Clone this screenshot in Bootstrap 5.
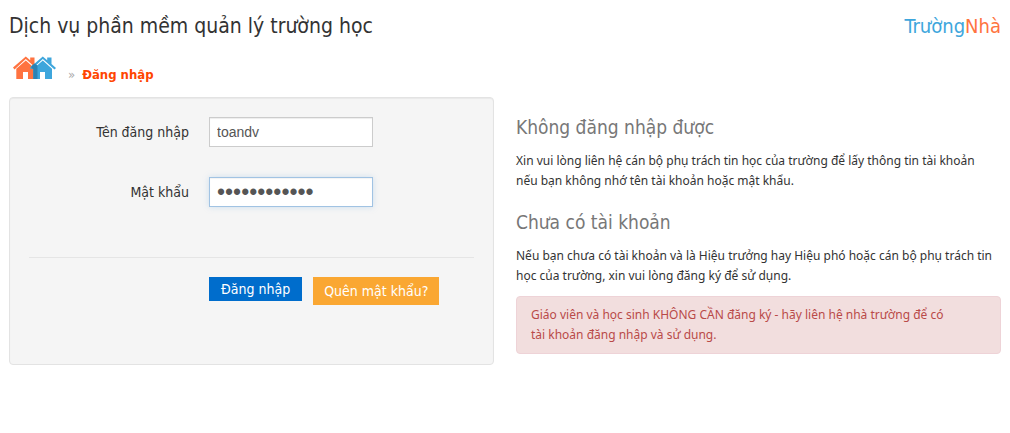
<!DOCTYPE html>
<html lang="vi">
<head>
<meta charset="utf-8">
<meta name="viewport" content="width=device-width, initial-scale=1">
<title>Đăng nhập - TrườngNhà</title>
<link href="https://cdn.jsdelivr.net/npm/bootstrap@5.3.0/dist/css/bootstrap.min.css" rel="stylesheet">
<style>
body { font-family: "DejaVu Sans Condensed", "Noto Sans", sans-serif; font-size: 12px; line-height: 20px; color: #333; background: #fff; }
.page { padding: 10px 9px; }
.site-title { font-size: 21px; line-height: 32px; }
.brand { font-size: 20px; line-height: 32px; color: #3ea6dc; text-decoration: none; }
.brand span { color: #ff7340; }
.crumbs { height: 55px; padding: 14px 4px 0; gap: 12px; }
.crumbs svg { display: block; width: 43px; height: 24px; }
.crumbs .trail { gap: 7px; padding-top: 9px; font-size: 13px; }
.crumbs .sep { color: #aaa; }
.crumbs .here { color: #ff4500; text-decoration: none; }
.panels { display: grid; gap: 22px; grid-template-columns: 1fr; }
@media (min-width: 768px) { .panels { grid-template-columns: 1fr 1fr; } }
.well { min-height: 268px; padding: 19px; background: #f5f5f5; border: 1px solid #e3e3e3; border-radius: 4px; box-shadow: inset 0 1px 1px rgba(0,0,0,.05); }
.field-row { gap: 20px; margin-bottom: 30px; }
.field-label { width: 160px; font-size: 14px; line-height: 20px; padding-top: 5px; text-align: right; }
.field { width: 164px; height: 30px; padding: 4px 7px; border: 1px solid #ccc; border-radius: 0; font: 14px/20px "Liberation Sans", Arial, sans-serif; color: #555; box-shadow: inset 0 1px 1px rgba(0,0,0,.075); }
.field-active { font-size: 23px; border-color: #a1c3e3; box-shadow: inset 0 1px 1px rgba(0,0,0,.05), 0 0 6px rgba(130,180,225,.35); }
.actions { border-top: 1px solid #e5e5e5; padding: 19px 0 0 180px; margin-top: 50px; gap: 11px; }
.actions .btn { font-size: 14px; line-height: 20px; border: 0; border-radius: 0; padding: 2px 12px; color: #fff; white-space: nowrap; }
.actions .btn-login { background: #006dcc; }
.actions .btn-forgot { background: #faa732; padding: 4px 11px; }
.help { padding-top: 20px; }
.help h2 { font-size: 19px; line-height: 20px; font-weight: 400; color: #777; margin: 0 0 14px; }
.help p { margin-bottom: 21px; padding-right: 6px; }
.help p, .help .notice { font-family: "Noto Sans", sans-serif; }
.help .notice { background: #f2dede; border: 1px solid #eed3d7; border-radius: 4px; color: #b94a48; padding: 8px 45px 8px 14px; margin: -11px 0 0; }
</style>
</head>
<body>
<div class="container-fluid page">
  <header class="d-flex justify-content-between">
    <h1 class="site-title fw-normal m-0">Dịch vụ phần mềm quản lý trường học</h1>
    <a class="brand" href="#">Trường<span>Nhà</span></a>
  </header>
  <nav class="crumbs d-flex" aria-label="Đường dẫn">
    <a href="#" aria-label="Trang chủ">
      <svg viewBox="0 0 43 24" aria-hidden="true">
        <defs>
          <g id="house">
            <path d="M0 11.5 L12.8 .5 L17.2 4.2 V1.5 H21.5 V8 L26 12 L24.5 13.5 L12.8 3 L1.5 13.5Z"/>
            <path d="M3.3 12.8 L12.8 4.6 L22 12.8 V23 H15 V16 H10 V23 H3.3Z"/>
          </g>
        </defs>
        <use href="#house" fill="#ff7340"/>
        <use href="#house" x="17" fill="#3ea6dc"/>
        <path d="M18.5 10 L21.5 7.5 L24.5 9.5 L20.5 13.3 L18.5 12Z M20.3 13 L24.5 9.6 V23 H20.3Z" fill="#2c83b5"/>
      </svg>
    </a>
    <div class="trail d-flex"><span class="sep">»</span><a class="here fw-bold" href="#">Đăng nhập</a></div>
  </nav>
  <main class="panels">
    <form class="well">
      <div class="field-row d-flex">
        <label class="field-label" for="user">Tên đăng nhập</label>
        <input class="field" id="user" type="text" value="toandv">
      </div>
      <div class="field-row d-flex">
        <label class="field-label" for="pass">Mật khẩu</label>
        <input class="field field-active" id="pass" type="password" value="matkhau12345">
      </div>
      <div class="actions d-flex align-items-start">
        <button class="btn btn-login" type="submit">Đăng nhập</button>
        <button class="btn btn-forgot" type="button">Quên mật khẩu?</button>
      </div>
    </form>
    <section class="help">
      <h2>Không đăng nhập được</h2>
      <p>Xin vui lòng liên hệ cán bộ phụ trách tin học của trường để lấy thông tin tài khoản nếu bạn không nhớ tên tài khoản hoặc mật khẩu.</p>
      <h2>Chưa có tài khoản</h2>
      <p>Nếu bạn chưa có tài khoản và là Hiệu trưởng hay Hiệu phó hoặc cán bộ phụ trách tin học của trường, xin vui lòng đăng ký để sử dụng.</p>
      <div class="notice" role="alert">Giáo viên và học sinh KHÔNG CẦN đăng ký - hãy liên hệ nhà trường để có tài khoản đăng nhập và sử dụng.</div>
    </section>
  </main>
</div>
<script src="https://cdn.jsdelivr.net/npm/bootstrap@5.3.0/dist/js/bootstrap.bundle.min.js"></script>
</body>
</html>
